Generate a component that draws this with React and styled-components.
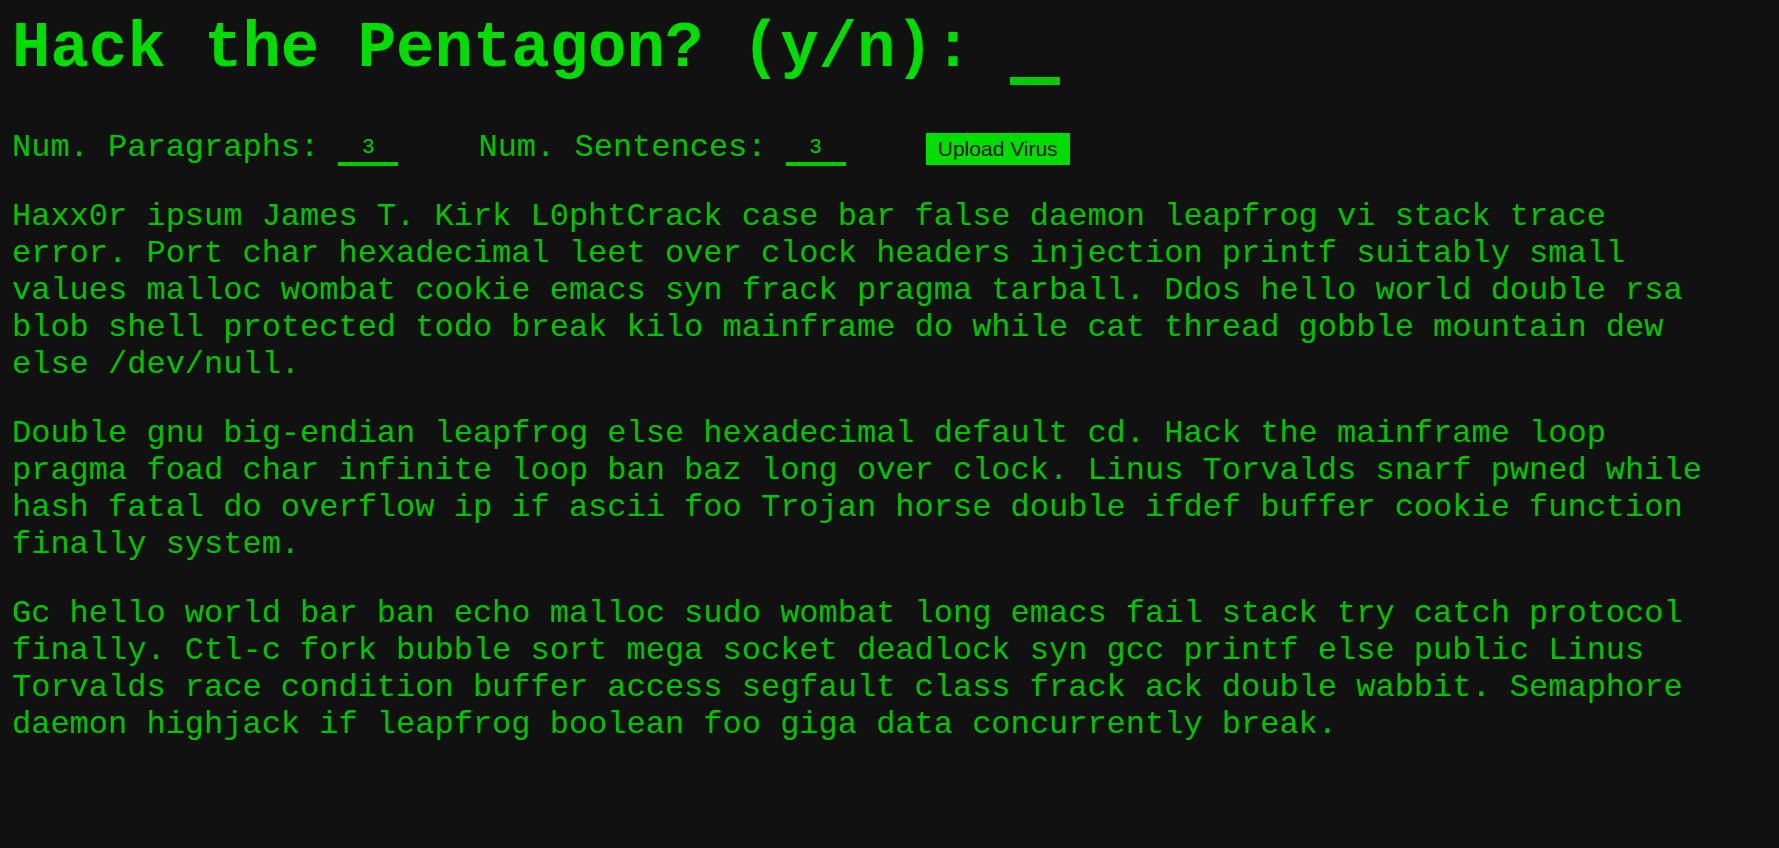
import React from 'react'
import styled, { createGlobalStyle } from 'styled-components'

const paragraphs = [
  'Haxx0r ipsum James T. Kirk L0phtCrack case bar false daemon leapfrog vi stack trace error. Port char hexadecimal leet over clock headers injection printf suitably small values malloc wombat cookie emacs syn frack pragma tarball. Ddos hello world double rsa blob shell protected todo break kilo mainframe do while cat thread gobble mountain dew else /dev/null.',
  'Double gnu big-endian leapfrog else hexadecimal default cd. Hack the mainframe loop pragma foad char infinite loop ban baz long over clock. Linus Torvalds snarf pwned while hash fatal do overflow ip if ascii foo Trojan horse double ifdef buffer cookie function finally system.',
  'Gc hello world bar ban echo malloc sudo wombat long emacs fail stack try catch protocol finally. Ctl-c fork bubble sort mega socket deadlock syn gcc printf else public Linus Torvalds race condition buffer access segfault class frack ack double wabbit. Semaphore daemon highjack if leapfrog boolean foo giga data concurrently break.',
]

function App() {
  return (
    <>
      <GlobalStyle />
      <Page>
        <Title>
          Hack the Pentagon? (y/n): <Cursor />
        </Title>
        <Controls>
          <Label>Num. Paragraphs: </Label>
          <Field type="text" defaultValue="3" />
          <Label $gap>Num. Sentences: </Label>
          <Field type="text" defaultValue="3" />
          <UploadButton>Upload Virus</UploadButton>
        </Controls>
        {paragraphs.map((text, i) => (
          <Paragraph key={i}>{text}</Paragraph>
        ))}
      </Page>
    </>
  )
}

export default App

const GlobalStyle = createGlobalStyle`
  html, body {
    margin: 0;
    background-color: #111111;
  }
  body {
    font-family: "Liberation Mono", "Courier New", monospace;
    color: #00c400;
  }
`

const Page = styled.div`
  box-sizing: border-box;
  max-width: 1722px;
  min-height: 848px;
  padding: 13px 0 0 12px;
`

const Title = styled.h1`
  margin: 0;
  font-size: 64px;
  font-weight: bold;
  line-height: normal;
  color: #00dd00;
  white-space: pre;
`

const Cursor = styled.span`
  display: inline-block;
  width: 50px;
  height: 8px;
  margin-left: -1px;
  vertical-align: -19px;
  background-color: #00cc00;
`

const Controls = styled.div`
  display: flex;
  align-items: flex-end;
  margin-top: 44px;
`

const Label = styled.span`
  font-size: 32px;
  line-height: normal;
  white-space: pre;
  margin-left: ${p => (p.$gap ? '80px' : '0')};
`

const Field = styled.input`
  box-sizing: border-box;
  width: 60px;
  height: 36px;
  padding: 0;
  border: none;
  border-bottom: 4px solid #00cc00;
  background: transparent;
  color: #00cc00;
  font-family: "Liberation Sans", Arial, sans-serif;
  font-size: 21px;
  text-align: center;
  outline: none;
`

const UploadButton = styled.button`
  box-sizing: border-box;
  width: 144px;
  height: 32px;
  margin: 0 0 1px 80px;
  padding: 0;
  border: none;
  background-color: #00dd00;
  color: #111111;
  font-family: "Liberation Sans", Arial, sans-serif;
  font-size: 21px;
  cursor: pointer;
`

const Paragraph = styled.p`
  margin: 32px 0;
  font-size: 32px;
  line-height: normal;
`
